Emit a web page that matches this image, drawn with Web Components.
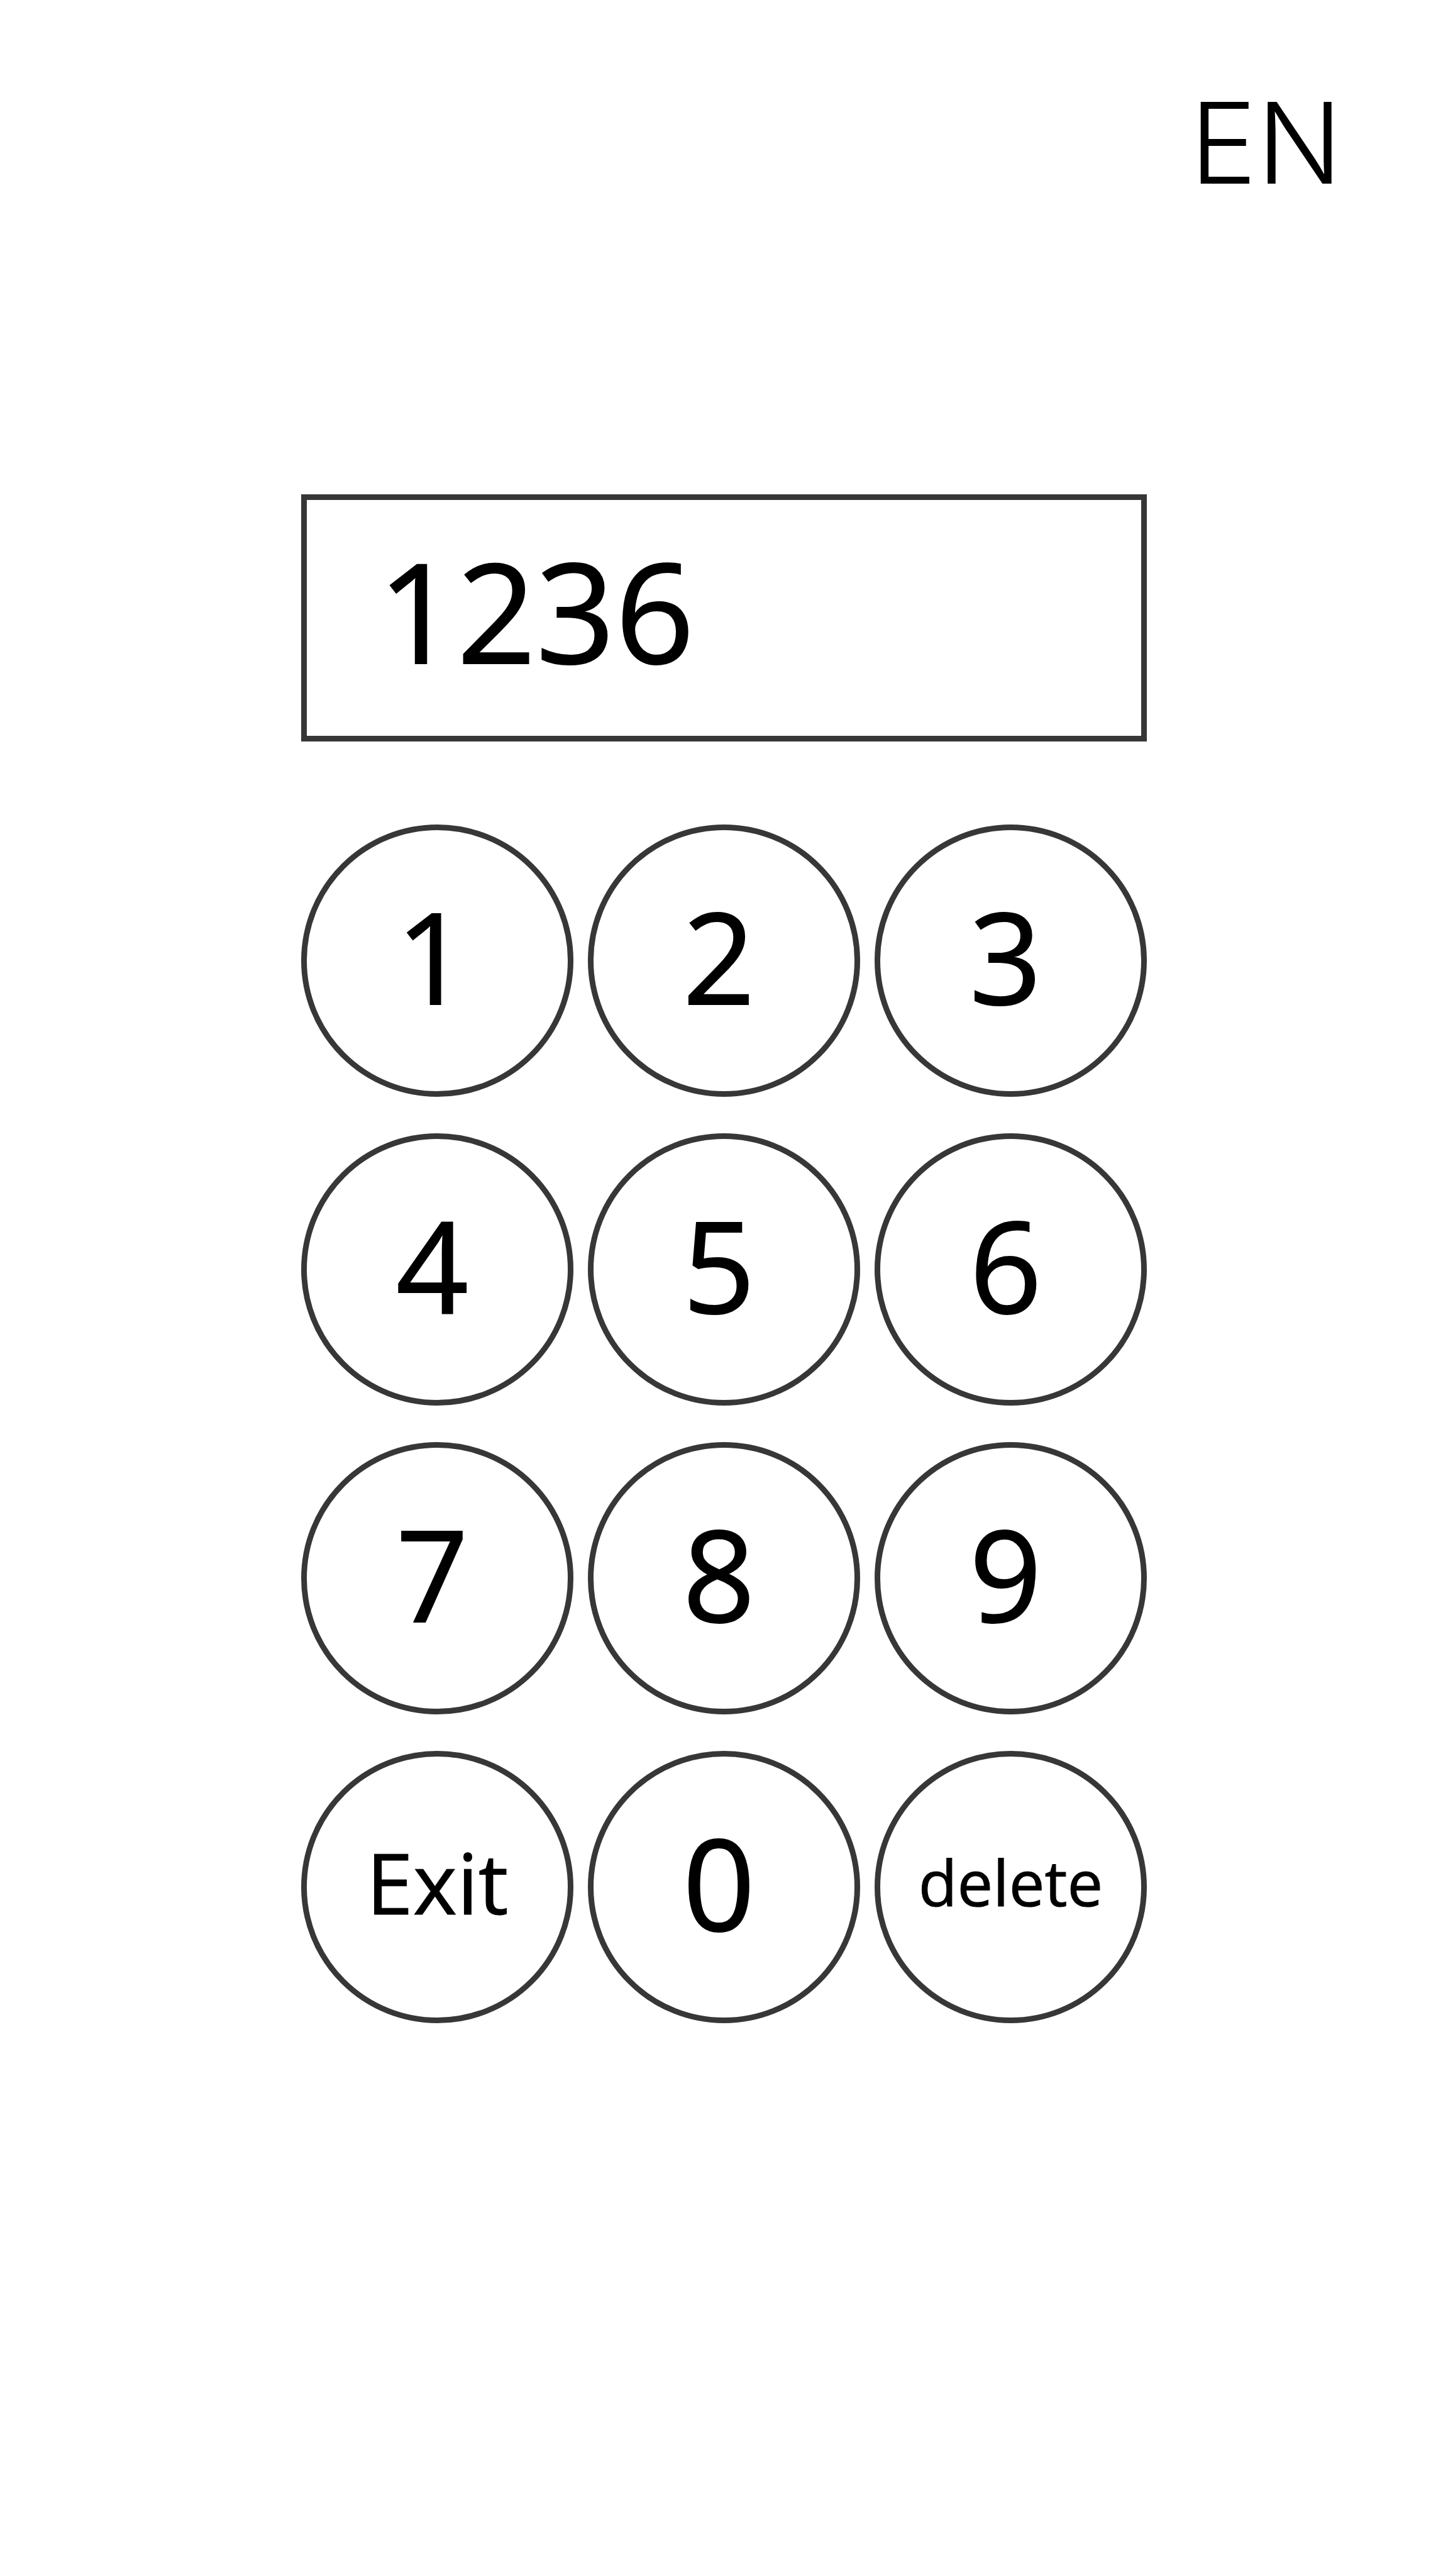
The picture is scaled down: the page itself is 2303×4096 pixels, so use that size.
<!DOCTYPE html>
<html lang="en">
<head>
<meta charset="utf-8">
<meta name="viewport" content="width=device-width, initial-scale=1">
<title>Keypad</title>
<style>
  html, body { margin: 0; background: #fff; }
  body {
    --line: #373737;
    --stroke: 9px;
    color: #000;
    font-family: "Open Sans", "Noto Sans", sans-serif;
  }
</style>
</head>
<body>
<keypad-screen>
  <language-switch slot="header">EN</language-switch>
  <code-display value="1236"></code-display>
  <key-grid>
    <pad-key>1</pad-key>
    <pad-key>2</pad-key>
    <pad-key>3</pad-key>
    <pad-key>4</pad-key>
    <pad-key>5</pad-key>
    <pad-key>6</pad-key>
    <pad-key>7</pad-key>
    <pad-key>8</pad-key>
    <pad-key>9</pad-key>
    <pad-key kind="exit">Exit</pad-key>
    <pad-key>0</pad-key>
    <pad-key kind="delete">delete</pad-key>
  </key-grid>
</keypad-screen>

<script>
  class ShadowElement extends HTMLElement {
    constructor() {
      super();
      this.attachShadow({ mode: 'open' }).innerHTML = this.constructor.markup;
    }
  }

  customElements.define('keypad-screen', class extends ShadowElement {
    static markup = `
      <style>
        :host { display: flex; flex-direction: column; min-height: 100vh; box-sizing: border-box; }
        header { display: flex; justify-content: flex-end; padding: 127px 7.3% 0; }
        main { display: flex; flex-direction: column; gap: 132px; padding: 459px 20.8% 132px; }
      </style>
      <header><slot name="header"></slot></header>
      <main><slot></slot></main>`;
  });

  customElements.define('language-switch', class extends ShadowElement {
    static markup = `
      <style>
        :host { display: block; }
        button {
          display: block; margin: 0; padding: 0; border: 0; background: none;
          color: inherit; font: 300 179px/200px Inter, "Open Sans", sans-serif; cursor: pointer;
        }
      </style>
      <button type="button"><slot></slot></button>`;
  });

  customElements.define('code-display', class extends ShadowElement {
    static markup = `
      <style>
        :host { display: block; }
        input {
          display: block; box-sizing: border-box; width: 100%; height: 393px; margin: 0;
          padding: 0 40px 26px 113px; border: var(--stroke) solid var(--line); border-radius: 0;
          background: none; color: inherit; outline: none;
          font: 400 220px/300px "Open Sans", "Noto Sans", sans-serif;
          -webkit-text-stroke: 2px currentColor;
        }
      </style>
      <input type="text" inputmode="numeric" aria-label="Code">`;
    connectedCallback() {
      this.input = this.shadowRoot.querySelector('input');
      this.input.value = this.getAttribute('value') || '';
    }
    append(text) { this.input.value += text; }
    erase() { this.input.value = this.input.value.slice(0, -1); }
    clear() { this.input.value = ''; }
  });

  customElements.define('key-grid', class extends ShadowElement {
    static markup = `
      <style>
        :host { display: grid; grid-template-columns: repeat(3, 1fr); gap: 58px 23px; }
      </style>
      <slot></slot>`;
    connectedCallback() {
      this.addEventListener('click', (event) => {
        const key = event.target.closest('pad-key');
        const display = document.querySelector('code-display');
        if (!key) return;
        const kind = key.getAttribute('kind');
        if (kind === 'delete') display.erase();
        else if (kind === 'exit') display.clear();
        else display.append(key.textContent.trim());
      });
    }
  });

  customElements.define('pad-key', class extends ShadowElement {
    static markup = `
      <style>
        :host { display: block; aspect-ratio: 1; }
        button {
          display: flex; align-items: center; justify-content: center;
          box-sizing: border-box; width: 100%; height: 100%; margin: 0; padding: 0 16px 18px 0;
          border: var(--stroke) solid var(--line); border-radius: 50%;
          background: none; color: inherit; cursor: pointer;
          font: 400 201px/240px "Open Sans", "Noto Sans", sans-serif;
          -webkit-text-stroke: 2px currentColor;
        }
        :host([kind]) button { padding-right: 0; -webkit-text-stroke-width: 1px; }
        :host([kind="exit"]) button { font-size: 134px; }
        :host([kind="delete"]) button { font-size: 101px; }
      </style>
      <button type="button"><slot></slot></button>`;
  });
</script>
</body>
</html>
